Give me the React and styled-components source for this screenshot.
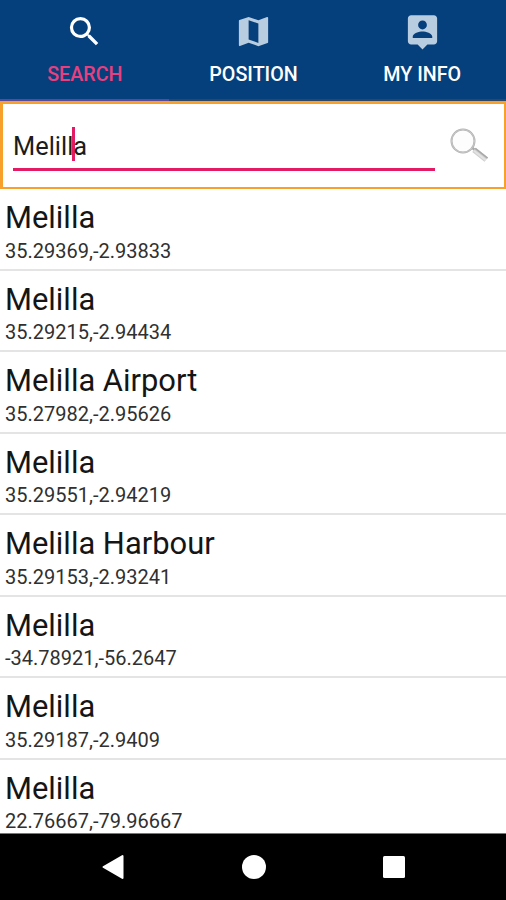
import React from 'react'
import { MdMap, MdSearch } from 'react-icons/md'
import styled, { createGlobalStyle } from 'styled-components'

const GlobalStyle=createGlobalStyle`
*{
box-sizing:border-box;
}
body{
margin:0;
background-color:white;
font-family:Roboto, "Liberation Sans", sans-serif;
}
`

const Container=styled.div`
width:506px;
height:900px;
display:flex;
flex-direction:column;
overflow:hidden;
background-color:white;
`

const Tabs=styled.nav`
height:101px;
flex-shrink:0;
display:flex;
background-color:#053f7c;
`

const Tab=styled.div`
flex:1;
display:flex;
flex-direction:column;
align-items:center;
padding:12px 0 0 1px;
color:${props=>props.$active ? "#e8407f" : "white"};
border-bottom:2px solid ${props=>props.$active ? "#5a489c" : "#2f4566"};

svg{
color:${props=>props.$active ? "white" : "#b9cde0"};
}
`

const TabLabel=styled.span`
margin-top:12px;
font-size:19.7px;
line-height:24px;
font-weight:500;
`

const SearchBar=styled.div`
height:88px;
flex-shrink:0;
display:flex;
border:3px solid #f7a02c;
border-width:3px 2px 2px 3px;
padding:0 12px 0 10px;
`

const Field=styled.div`
width:422px;
height:67px;
display:flex;
align-items:center;
padding-top:19px;
border-bottom:3px solid #e31b64;
font-size:25.4px;
line-height:34px;
color:#1c1c1c;
`

const Caret=styled.span`
width:3px;
height:34px;
margin:-4px -2px 0 -1px;
background-color:#e31b64;
`

const SearchButton=styled.div`
margin:23px 0 0 13px;
width:42px;
height:38px;
`

const List=styled.div`
flex:1;
min-height:0;
overflow:hidden;
`

const Row=styled.div`
height:81.57px;
padding:11px 5px 0;
border-bottom:2px solid #e4e4e4;
`

const Title=styled.div`
font-size:30.9px;
line-height:36px;
color:#151515;
`

const Coords=styled.div`
margin-top:2.5px;
font-size:20px;
line-height:24px;
color:#303030;
`

const NavBar=styled.div`
height:67px;
flex-shrink:0;
display:flex;
align-items:center;
justify-content:space-around;
padding:0 42px;
border-top:1px solid #777777;
background-color:black;
`

const places=[
  { name:"Melilla", coords:"35.29369,-2.93833" },
  { name:"Melilla", coords:"35.29215,-2.94434" },
  { name:"Melilla Airport", coords:"35.27982,-2.95626" },
  { name:"Melilla", coords:"35.29551,-2.94219" },
  { name:"Melilla Harbour", coords:"35.29153,-2.93241" },
  { name:"Melilla", coords:"-34.78921,-56.2647" },
  { name:"Melilla", coords:"35.29187,-2.9409" },
  { name:"Melilla", coords:"22.76667,-79.96667" },
]

const PersonPin = () => {
  return (
    <svg width="39" height="39" viewBox="0 0 24 24" fill="currentColor">
      <path d="M19 2H5c-1.11 0-2 .9-2 2v14c0 1.1.89 2 2 2h4l3 3 3-3h4c1.1 0 2-.9 2-2V4c0-1.1-.9-2-2-2zm-7 3.3c1.49 0 2.7 1.21 2.7 2.7 0 1.49-1.21 2.7-2.7 2.7-1.49 0-2.7-1.21-2.7-2.7 0-1.49 1.21-2.7 2.7-2.7zM18 16H6v-.9c0-2 4-3.1 6-3.1s6 1.1 6 3.1v.9z"/>
    </svg>
  )
}

const Magnifier = () => {
  return (
    <svg width="42" height="38" viewBox="0 0 42 38" fill="none">
      <path d="M23 20L27 23" stroke="#aaaaaa" strokeWidth="2.5"/>
      <path d="M26 22.8L38.2 32.6" stroke="#cfcfcf" strokeWidth="5.5"/>
      <path d="M27.2 21.4L39.6 31.2" stroke="#a8a8a8" strokeWidth="1.5"/>
      <path d="M26 23.8L37.7 33.1" stroke="#e2e2e2" strokeWidth="2"/>
      <circle cx="15" cy="14" r="11.5" fill="#fdfdfd" stroke="#b0b0b0" strokeWidth="2"/>
      <circle cx="15" cy="14" r="11.5" stroke="#d2d2d2" strokeWidth="0.7"/>
    </svg>
  )
}

const App = () => {
  return (
    <Container>
        <GlobalStyle/>
        <Tabs>
            <Tab $active>
                <MdSearch size={39}/>
                <TabLabel>SEARCH</TabLabel>
            </Tab>
            <Tab>
                <MdMap size={39}/>
                <TabLabel>POSITION</TabLabel>
            </Tab>
            <Tab>
                <PersonPin/>
                <TabLabel>MY INFO</TabLabel>
            </Tab>
        </Tabs>
        <SearchBar>
            <Field>
                <span>Melill</span>
                <Caret/>
                <span>a</span>
            </Field>
            <SearchButton>
                <Magnifier/>
            </SearchButton>
        </SearchBar>
        <List>
            {places.map((place)=>(
              <Row key={place.coords}>
                <Title>{place.name}</Title>
                <Coords>{place.coords}</Coords>
              </Row>
            ))}
        </List>
        <NavBar>
            <svg width="24" height="26" viewBox="0 0 24 26">
              <path d="M2.5 13L21.5 2V24Z" fill="white" stroke="white" strokeWidth="2" strokeLinejoin="round"/>
            </svg>
            <svg width="24" height="24" viewBox="0 0 24 24">
              <circle cx="12" cy="12" r="12" fill="white"/>
            </svg>
            <svg width="22" height="22" viewBox="0 0 22 22">
              <rect width="22" height="22" rx="1.5" fill="white"/>
            </svg>
        </NavBar>
    </Container>
  )
}

export default App
